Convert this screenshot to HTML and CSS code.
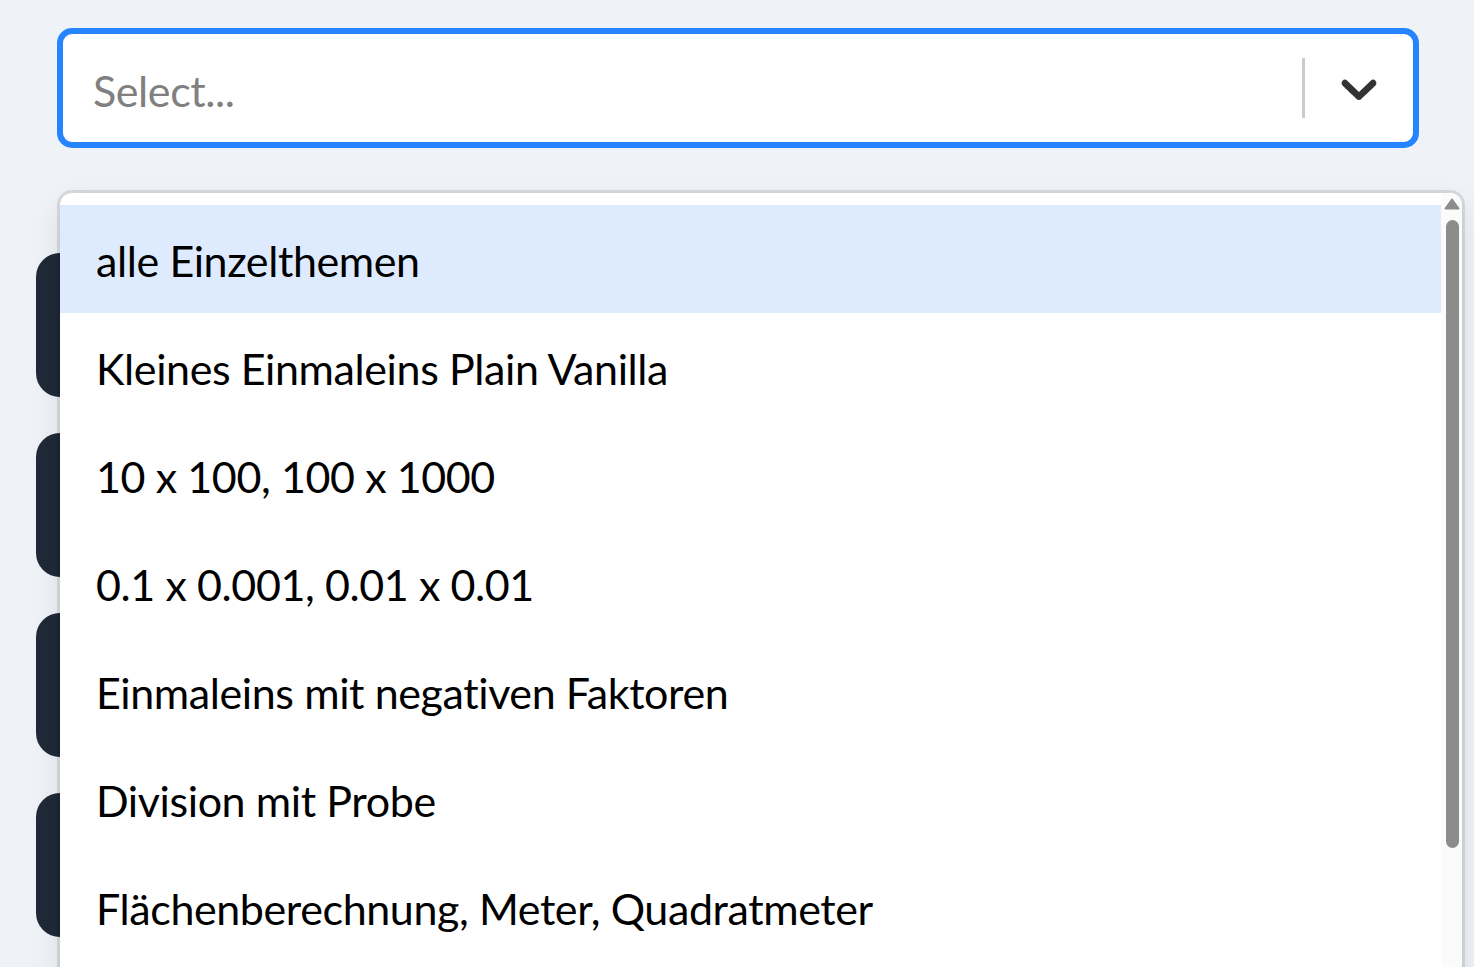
FILE: index.html
```html
<!DOCTYPE html>
<html lang="de">
<head>
<meta charset="utf-8">
<title>Select</title>
<link rel="stylesheet" href="styles.css">
</head>
<body>
<div class="page">
  <div class="select-wrap">
    <div class="control">
      <div class="value">
        <span class="placeholder">Select...</span>
      </div>
      <div class="indicators">
        <span class="separator"></span>
        <span class="dropdown">
          <svg viewBox="0 0 20 20" width="60" height="60" aria-hidden="true"><path d="M4.516 7.548c0.436-0.446 1.043-0.481 1.576 0l3.908 3.747 3.908-3.747c0.533-0.481 1.141-0.446 1.574 0 0.436 0.445 0.408 1.197 0 1.615-0.406 0.418-4.695 4.502-4.695 4.502-0.217 0.223-0.502 0.335-0.787 0.335s-0.57-0.112-0.789-0.335c0 0-4.287-4.084-4.695-4.502s-0.436-1.17 0-1.615z"/></svg>
        </span>
      </div>
    </div>
    <div class="menu">
      <div class="menu-list">
        <div class="option focused">alle Einzelthemen</div>
        <div class="option">Kleines Einmaleins Plain Vanilla</div>
        <div class="option">10 x 100, 100 x 1000</div>
        <div class="option">0.1 x 0.001, 0.01 x 0.01</div>
        <div class="option">Einmaleins mit negativen Faktoren</div>
        <div class="option">Division mit Probe</div>
        <div class="option">Flächenberechnung, Meter, Quadratmeter</div>
      </div>
      <div class="scrollbar">
        <svg class="arrow" viewBox="0 0 16 12" width="16" height="12" aria-hidden="true"><path d="M8 1.5 L14.5 10.5 L1.5 10.5 Z"/></svg>
        <div class="thumb"></div>
      </div>
    </div>
  </div>
  <div class="cards">
    <div class="card"></div>
    <div class="card"></div>
    <div class="card"></div>
    <div class="card"></div>
  </div>
</div>
</body>
</html>
```

FILE: styles.css
```css
html, body {
  margin: 0;
  height: 100%;
  overflow: hidden;
}

body {
  background: #eff2f7;
  font-family: Lato, "Noto Sans", sans-serif;
  color: #000;
}

.page {
  padding: 31px 0 0 36px;
}

.select-wrap {
  position: relative;
  margin-left: 24px;
  width: 1356px;
}

.control {
  box-sizing: border-box;
  height: 114px;
  display: flex;
  align-items: stretch;
  background: #fff;
  border: 3px solid #2684ff;
  border-radius: 12px;
  box-shadow: 0 0 0 3px #2684ff;
}

.value {
  flex: 1;
  display: flex;
  align-items: center;
  padding: 8px 24px 4px;
}

.placeholder {
  margin-left: 6px;
  font-size: 43px;
  letter-spacing: -0.4px;
  color: #808080;
}

.indicators {
  display: flex;
  align-items: stretch;
}

.separator {
  width: 3px;
  margin: 24px 0;
  background: #cccccc;
}

.dropdown {
  display: flex;
  align-items: center;
  padding: 24px;
}

.dropdown svg {
  display: block;
  fill: #333333;
}

.menu {
  position: absolute;
  top: calc(100% + 48px);
  left: 0;
  width: 1402px;
  height: 820px;
  display: flex;
  background: #fff;
  border-radius: 12px;
  box-shadow: 0 0 0 3px rgba(0, 0, 0, 0.1), 0 12px 33px rgba(0, 0, 0, 0.1);
  overflow: hidden;
  z-index: 2;
}

.menu-list {
  flex: 1;
  padding-top: 12px;
}

.option {
  box-sizing: border-box;
  height: 108px;
  padding: 26px 36px 22px;
  font-size: 43px;
  letter-spacing: -0.4px;
  line-height: 60px;
  white-space: nowrap;
}

.option.focused {
  background: #deebff;
}

.scrollbar {
  position: relative;
  width: 21px;
  background: #fbfbfb;
}

.arrow {
  position: absolute;
  top: 5px;
  left: 3px;
  fill: #8c8c8c;
  stroke: #8c8c8c;
  stroke-width: 2;
  stroke-linejoin: round;
}

.thumb {
  position: absolute;
  top: 27px;
  left: 5px;
  width: 13px;
  height: 628px;
  border-radius: 7px;
  background: #8c8c8c;
}

.cards {
  position: relative;
  z-index: 1;
  margin-top: 108px;
  display: flex;
  flex-direction: column;
  gap: 36px;
}

.card {
  width: 1400px;
  height: 144px;
  border-radius: 24px;
  background: #1f2937;
}
```
